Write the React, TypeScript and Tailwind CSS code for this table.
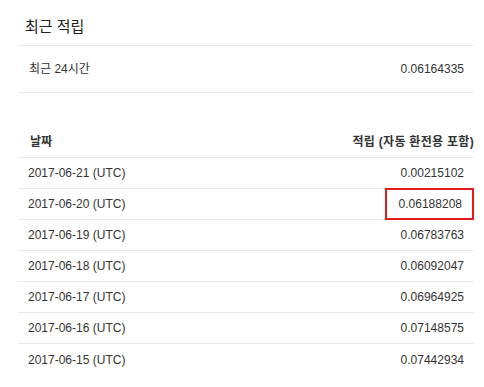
const rows = [
  { date: "2017-06-21 (UTC)", amount: "0.00215102" },
  { date: "2017-06-20 (UTC)", amount: "0.06188208", marked: true },
  { date: "2017-06-19 (UTC)", amount: "0.06783763" },
  { date: "2017-06-18 (UTC)", amount: "0.06092047" },
  { date: "2017-06-17 (UTC)", amount: "0.06964925" },
  { date: "2017-06-16 (UTC)", amount: "0.07148575" },
  { date: "2017-06-15 (UTC)", amount: "0.07442934" },
];

const font = "font-['Liberation_Sans','Noto_Sans_CJK_KR',sans-serif]";

export default function App() {
  return (
    <div className={`w-[484px] h-[387px] overflow-hidden bg-white text-[#333] ${font}`}>
      <div className="mx-[18px] w-[456px]">
        <div className="h-[46px] border-b border-[#e6e9ed] pl-[7px] pt-[16px] text-[15px] leading-[22px] text-[#222]">
          최근 적립
        </div>
        <div className="flex h-[47px] items-center justify-between border-b border-[#e6e9ed] pl-[11px] pr-[10px] text-[12px]">
          <span>최근 24시간</span>
          <span>0.06164335</span>
        </div>

        <div className="mt-[34px] flex h-[31px] items-center justify-between border-b border-[#e6e9ed] pl-[12px] text-[12px] font-bold">
          <span>날짜</span>
          <span className="tracking-[0.3px]">적립 (자동 환전용 포함)</span>
        </div>
        {rows.map((r) => (
          <div
            key={r.date}
            className="flex h-[31px] items-stretch justify-between border-b border-[#e6e9ed] text-[12px] last:border-b-0"
          >
            <span className="flex items-center pl-[10px]">{r.date}</span>
            <span
              className={`flex items-center pr-[10px] pl-[12px] ${
                r.marked ? "-mt-px mb-[-1px] border-2 border-[#e8191b] pr-[8px]" : ""
              }`}
            >
              {r.amount}
            </span>
          </div>
        ))}
      </div>
    </div>
  );
}
